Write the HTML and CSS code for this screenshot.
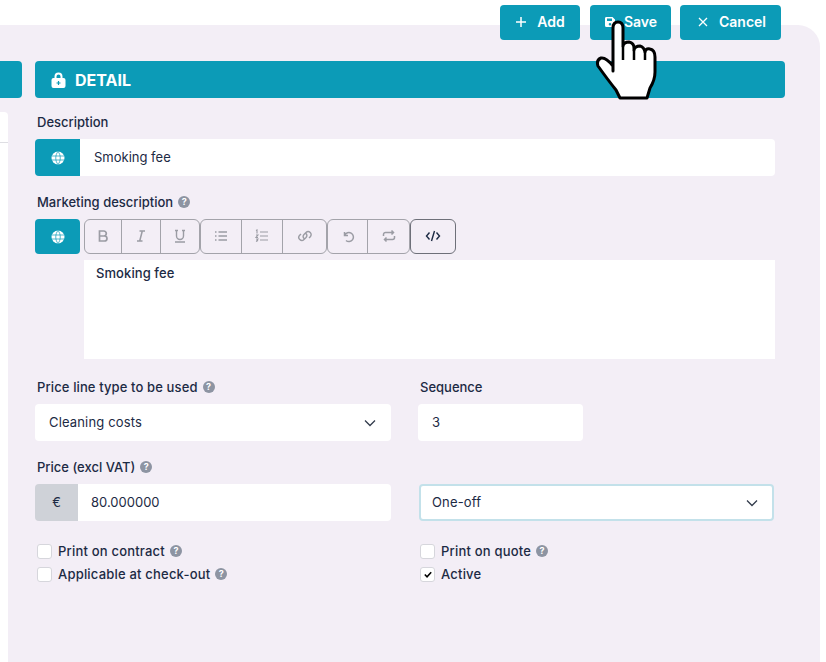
FILE: index.html
```html
<!DOCTYPE html>
<html lang="en">
<head>
<meta charset="utf-8">
<title>Detail</title>
<link rel="stylesheet" href="styles.css">
</head>
<body>
<div class="actions">
  <button class="act act-add"><svg class="act-ico" viewBox="0 0 12 12"><path d="M6 1v10M1 6h10" fill="none" stroke="#fff" stroke-width="1.500"/></svg>Add</button>
  <button class="act act-save"><svg class="act-ico" viewBox="0 0 12 12"><path fill="#fff" fill-rule="evenodd" d="M2 1h6.500L11 3.500V9.500A1.500 1.500 0 0 1 9.500 11h-7A1.500 1.500 0 0 1 1 9.500v-7A1.500 1.500 0 0 1 2 1zm1 1.500V5h5V2.500zM6 7a1.300 1.300 0 1 0 0 2.600A1.300 1.300 0 0 0 6 7z"/></svg>Save</button>
  <button class="act act-cancel"><svg class="act-ico small" viewBox="0 0 10 10"><path d="M1 1l8 8M9 1l-8 8" fill="none" stroke="#fff" stroke-width="1.300"/></svg>Cancel</button>
</div>
<svg class="hand" viewBox="595 20 65 85"><path d="M613 71V28Q613 22 618 22 623 22 623 28V46Q624 42 629 42 634 43 634 48V50Q635 46 640 46 644 47 645 52 646 48 650 49 655 50 655 57V72Q655 80 650 88L647 98H620L616 90Q608 80 598 66 596 60 601 58 606 57 613 66Z" fill="#fff" stroke="#000" stroke-width="3" stroke-linejoin="round"/><path d="M623 46V60M634 50V60M645 52V60" fill="none" stroke="#000" stroke-width="2.500"/></svg>
<main class="panel">
  <aside class="side">
    <div class="bar side-bar"></div>
    <div class="side-card"><div class="side-row"></div></div>
  </aside>
  <section class="detail">
    <h1 class="bar title"><svg class="lock" viewBox="0 0 14 16"><path fill="#fff" d="M3 6V4.500a4 4 0 0 1 8 0V6h1a2 2 0 0 1 2 2v6a2 2 0 0 1-2 2H2a2 2 0 0 1-2-2V8a2 2 0 0 1 2-2zm2 0h4V4.500a2 2 0 0 0-4 0z"/><path d="M7 9v4M5 11h4" stroke="#0c9bb7" stroke-width="1.200"/></svg>DETAIL</h1>
    <div class="form">
      <label class="lbl lbl-first">Description</label>
      <div class="group">
        <span class="addon"><svg class="globe" viewBox="0 0 14 14"><circle cx="7" cy="7" r="6.500" fill="#fff"/><path d="M.5 5h13M.5 9h13M7 .5C4 4 4 10 7 13.500M7 .5c3 3.500 3 9.500 0 13" fill="none" stroke="#0c9bb7" stroke-width=".7"/></svg></span>
        <div class="input grow flat-left pad-wide">Smoking fee</div>
      </div>
      <label class="lbl lbl-mkt">Marketing description <i class="help">?</i></label>
      <div class="editor">
        <span class="addon addon-mkt"><svg class="globe" viewBox="0 0 14 14"><circle cx="7" cy="7" r="6.500" fill="#fff"/><path d="M.5 5h13M.5 9h13M7 .5C4 4 4 10 7 13.500M7 .5c3 3.500 3 9.500 0 13" fill="none" stroke="#0c9bb7" stroke-width=".7"/></svg></span>
        <div class="editor-main">
          <div class="tools">
            <div class="tgroup">
              <span class="tool t37"><svg class="ti" viewBox="0 0 14 14"><path d="M3.500 2h4.300a2.500 2.500 0 0 1 0 5H3.500zM3.500 7h5a2.500 2.500 0 0 1 0 5h-5z" fill="none" stroke="#9b9ca4" stroke-width="1.700"/></svg></span>
              <span class="tool t39"><svg class="ti" viewBox="0 0 14 14"><path d="M5.500 2H11M3 12h5.500M8.300 2L5.700 12" fill="none" stroke="#9b9ca4" stroke-width="1.500"/></svg></span>
              <span class="tool t38"><svg class="ti" viewBox="0 0 14 14"><path d="M3.500 1.500V7a3.500 3.500 0 0 0 7 0V1.500M2 13h10M2 1.500h3M9 1.500h3" fill="none" stroke="#9b9ca4" stroke-width="1.400"/></svg></span>
            </div>
            <div class="tgroup">
              <span class="tool t41"><svg class="ti" viewBox="0 0 14 14"><path d="M4.500 3H13M4.500 7H13M4.500 11H13M1 3h1.500M1 7h1.500M1 11h1.500" fill="none" stroke="#9b9ca4" stroke-width="1.400"/></svg></span>
              <span class="tool t41"><svg class="ti" viewBox="0 0 14 14"><path d="M5 3h8M5 7h8M5 11h8M1 1.500l1-.5v3.500M1 6h2L1 8.500h2M1 10h2l-1 1.500h1l-2 1" fill="none" stroke="#9b9ca4" stroke-width="1.100"/></svg></span>
              <span class="tool t43"><svg class="ti ti-wide" viewBox="0 0 16 14"><path d="M7 9.500a3 3 0 0 1 0-4l2-2a3 3 0 0 1 4.300 4.200l-1.300 1.300M9 4.500a3 3 0 0 1 0 4l-2 2a3 3 0 0 1-4.300-4.200L4 5" fill="none" stroke="#9b9ca4" stroke-width="1.400"/></svg></span>
            </div>
            <div class="tgroup">
              <span class="tool t40"><svg class="ti" viewBox="0 0 14 14"><path d="M3.500 3v3.500H7M3.800 6.300A4.500 4.500 0 1 1 5 11.500" fill="none" stroke="#9b9ca4" stroke-width="1.500"/></svg></span>
              <span class="tool t41"><svg class="ti ti-wide" viewBox="0 0 16 14"><path d="M2.500 7V5.500a2 2 0 0 1 2-2H12M10.500 1.500l2 2-2 2M13.500 7v1.500a2 2 0 0 1-2 2H4M5.500 8.500l-2 2 2 2" fill="none" stroke="#9b9ca4" stroke-width="1.500"/></svg></span>
            </div>
            <div class="tgroup tgroup-dark">
              <span class="tool t44"><svg class="ti ti-wide" viewBox="0 0 16 14"><path d="M4.500 3.500L1.500 7l3 3.500M11.500 3.500l3 3.500-3 3.500M9.500 2L6.500 12" fill="none" stroke="#1c2a44" stroke-width="1.400"/></svg></span>
            </div>
          </div>
          <div class="edit-box">Smoking fee</div>
        </div>
      </div>
      <div class="two two-a">
        <div>
          <label class="lbl lbl-wide">Price line type to be used <i class="help">?</i></label>
          <div class="input select wide-text">Cleaning costs<svg class="chev" viewBox="0 0 12 8"><path d="M1 1.500l5 5 5-5" fill="none" stroke="#333c4c" stroke-width="1.300"/></svg></div>
        </div>
        <div>
          <label class="lbl">Sequence</label>
          <div class="input seq">3</div>
        </div>
      </div>
      <div class="two two-b">
        <div>
          <label class="lbl">Price (excl VAT) <i class="help">?</i></label>
          <div class="group">
            <span class="addon addon-grey">€</span>
            <div class="input grow flat-left pad-mid">80.000000</div>
          </div>
        </div>
        <div class="oneoff-cell">
          <div class="input select focus wide-text">One-off<svg class="chev" viewBox="0 0 12 8"><path d="M1 1.500l5 5 5-5" fill="none" stroke="#333c4c" stroke-width="1.300"/></svg></div>
        </div>
      </div>
      <div class="two two-c">
        <div class="checks">
          <div class="check"><span class="box"></span>Print on contract <i class="help">?</i></div>
          <div class="check"><span class="box"></span>Applicable at check-out <i class="help">?</i></div>
        </div>
        <div class="checks">
          <div class="check"><span class="box"></span>Print on quote <i class="help">?</i></div>
          <div class="check"><span class="box"><svg class="tick" viewBox="0 0 10 8"><path d="M1 4l2.800 2.800L9 1.200" fill="none" stroke="#000" stroke-width="2"/></svg></span>Active</div>
        </div>
      </div>
    </div>
  </section>
</main>
</body>
</html>
```
FILE: styles.css
```css
* { box-sizing: border-box; }
html, body { margin: 0; height: 100%; overflow: hidden; background: #fff; }
body { font-family: Inter, "Liberation Sans", sans-serif; font-size: 13px; color: #1c2a44; position: relative; }

.actions { position: absolute; top: 5px; left: 500px; display: flex; gap: 10px; z-index: 2; }
.act { height: 35px; padding: 0 0 2px; border: 0; border-radius: 4px; background: #0c9bb7; color: #fff; font: 600 14px Inter, "Liberation Sans", sans-serif; display: flex; align-items: center; justify-content: center; gap: 10px; }
.act-add { width: 80px; }
.act-save { width: 81px; gap: 8px; }
.act-cancel { width: 101px; margin-left: -1px; gap: 11px; padding-left: 3px; }
.act-ico { width: 12px; height: 12px; }
.act-ico.small { width: 10px; height: 10px; }
.hand { position: absolute; left: 595px; top: 20px; width: 65px; height: 85px; z-index: 3; }

.panel { margin-top: 25px; width: 820px; height: 637px; padding-top: 36px; background: #f3eef6; border-radius: 0 22px 0 0; display: flex; gap: 13px; }
.side { width: 22px; }
.bar { height: 37px; background: #0c9bb7; border-radius: 4px; }
.side-bar { border-radius: 0 4px 4px 0; }
.side-card { width: 8px; height: 550px; margin-top: 14px; background: #fff; border-radius: 0 4px 0 0; }
.side-row { height: 31px; border-bottom: 1px solid #dedee3; }

.detail { width: 750px; }
.title { margin: 0; display: flex; align-items: center; gap: 9px; padding-left: 16px; color: #fff; font-size: 16px; font-weight: 700; }
.lock { width: 15px; height: 16px; }
.form { width: 740px; }
.lbl { display: flex; align-items: center; gap: 5px; height: 17px; padding: 0 0 2px 2px; font-size: 13px; font-weight: 500; color: #1c2a44; }
.lbl-wide { letter-spacing: .12px; }
.lbl-first { margin-top: 16px; margin-bottom: 8px; }
.lbl-mkt { margin-top: 18px; margin-bottom: 8px; }
.help { width: 12px; height: 12px; border-radius: 50%; background: #8d94a2; color: #fff; font: 700 9px/12px Inter, sans-serif; letter-spacing: 0; text-align: center; flex: none; display: inline-block; }

.group { display: flex; }
.addon { width: 45px; height: 37px; background: #0c9bb7; border-radius: 4px 0 0 4px; display: flex; align-items: center; justify-content: center; flex: none; }
.addon-mkt { width: 45px; height: 35px; border-radius: 4px; margin-right: 4px; }
.addon-grey { width: 43px; background: #cfd2d8; color: #1c2a44; font-size: 13px; padding-bottom: 2px; }
.globe { width: 14px; height: 14px; }
.input { height: 37px; background: #fff; border-radius: 4px; display: flex; align-items: center; font-size: 13px; color: #1c2a44; padding: 0 0 2px 14px; }
.wide-text { letter-spacing: .15px; }
.grow { flex: 1; }
.flat-left { border-radius: 0 4px 4px 0; }
.pad-wide { padding-left: 14px; }
.pad-mid { padding-left: 13px; }

.editor { display: flex; }
.editor-main { flex: 1; }
.tools { display: flex; height: 35px; }
.tgroup { display: flex; border: 1px solid #a3a3aa; border-radius: 6px; }
.tgroup-dark { border-color: #6e7079; }
.tool { display: flex; align-items: center; justify-content: center; height: 100%; padding-bottom: 2px; border-right: 1px solid #a3a3aa; }
.tool:last-child { border-right: 0; }
.t37 { width: 37px; }
.t38 { width: 38px; }
.t39 { width: 39px; }
.t40 { width: 40px; }
.t41 { width: 41px; }
.t43 { width: 43px; }
.t44 { width: 44px; }
.ti { width: 14px; height: 14px; }
.ti-wide { width: 16px; }
.edit-box { height: 99px; margin-top: 6px; padding: 5px 12px; background: #fff; font-size: 13px; line-height: 16px; font-weight: 500; letter-spacing: .08px; }

.two { display: grid; grid-template-columns: 356px 357px; column-gap: 27px; }
.two-a { margin-top: 20px; }
.two-a .lbl, .two-b .lbl { margin-bottom: 8px; }
.two-b { margin-top: 18px; }
.two-c { margin-top: 22px; }
.seq { width: 165px; }
.select { justify-content: space-between; padding-right: 15px; }
.chev { width: 12px; height: 8px; margin-top: 2px; }
.oneoff-cell { padding-top: 25px; }
.focus { width: 355px; margin-left: 1px; border: 2px solid #c3e1ea; padding: 0 14px 2px 11px; }
.checks { display: flex; flex-direction: column; gap: 7px; padding-left: 2px; }
.check { display: flex; align-items: center; height: 16px; font-weight: 500; font-size: 13px; letter-spacing: .2px; }
.check .help { margin-left: 5px; }
.box { width: 15px; height: 15px; margin-right: 6px; background: #fff; border: 1px solid #d6d6dc; border-radius: 3px; display: flex; align-items: center; justify-content: center; }
.tick { width: 8px; height: 7px; }
```
